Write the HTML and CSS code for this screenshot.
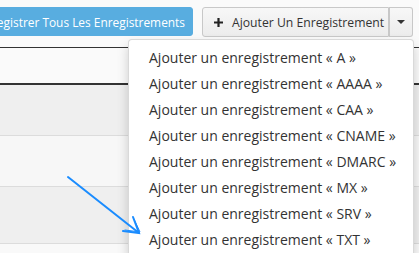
FILE: index.html
```html
<!DOCTYPE html>
<html lang="fr">
<head>
<meta charset="utf-8">
<link rel="stylesheet" href="styles.css">
</head>
<body>
<div class="page">
  <div class="toolbar">
    <button class="btn btn-info">Enregistrer Tous Les Enregistrements</button>
    <div class="btn-group">
      <button class="btn btn-default btn-main">
        <svg class="plus" width="9" height="9" viewBox="0 0 9 9"><path d="M4.5 0v9M0 4.5h9" stroke="#222" stroke-width="2.2"/></svg>
        <span>Ajouter Un Enregistrement</span>
      </button>
      <button class="btn btn-default btn-caret"><span class="caret"></span></button>
    </div>
  </div>
  <div class="table">
    <div class="thead"></div>
    <div class="row row-a"></div>
    <div class="row row-b"></div>
    <div class="row row-a row-tall"></div>
    <div class="row row-c"></div>
  </div>
  <ul class="menu">
    <li>Ajouter un enregistrement « A »</li>
    <li>Ajouter un enregistrement « AAAA »</li>
    <li>Ajouter un enregistrement « CAA »</li>
    <li>Ajouter un enregistrement « CNAME »</li>
    <li>Ajouter un enregistrement « DMARC »</li>
    <li>Ajouter un enregistrement « MX »</li>
    <li>Ajouter un enregistrement « SRV »</li>
    <li>Ajouter un enregistrement « TXT »</li>
  </ul>
  <svg class="arrow" width="419" height="253" viewBox="0 0 419 253">
    <g stroke="#1a8cff" stroke-width="2" fill="none" stroke-linecap="round">
      <path d="M68 177 L139 233"/>
      <path d="M133 217 L139 233 L123 231"/>
      <path d="M134 219 L140 232 L125 230" stroke-width="1"/>
    </g>
  </svg>
</div>
</body>
</html>
```
FILE: styles.css
```css
* { box-sizing: border-box; }
html, body { margin: 0; padding: 0; background: #fff; }
body { font-family: "Open Sans", "DejaVu Sans", sans-serif; overflow: hidden; }
.page { position: relative; width: 419px; height: 253px; overflow: hidden; }

.toolbar {
  display: flex;
  justify-content: flex-end;
  align-items: flex-start;
  gap: 9px;
  padding: 7px 6px 0 0;
  height: 47px;
  background: #fafafa;
}
.btn {
  font-family: "Open Sans", sans-serif;
  font-size: 12.2px;
  height: 30px;
  border-radius: 3px;
  display: flex;
  align-items: center;
  white-space: nowrap;
  flex-shrink: 0;
  cursor: pointer;
}
.btn-info {
  background: #58ade0;
  border: 1px solid #58ade0;
  color: #fff;
  height: 29px;
  font-size: 11.9px;
  padding: 0 7px 0 10px;
}
.btn-group { display: flex; }
.btn-default {
  background: linear-gradient(#f7f7f7, #ececec);
  border: 1px solid #c8c8c8;
  color: #333;
}
.btn-main {
  width: 187px;
  border-radius: 3px 0 0 3px;
  padding: 0 0 0 11px;
  gap: 9px;
  overflow: hidden;
}
.plus { flex-shrink: 0; }
.btn-caret {
  width: 24px;
  border-left: none;
  border-radius: 0 3px 3px 0;
  justify-content: center;
  padding: 0;
  box-shadow: inset 1px 0 0 #c8c8c8;
}
.caret {
  width: 0; height: 0;
  border-left: 4px solid transparent;
  border-right: 4px solid transparent;
  border-top: 4px solid #333;
}

.table { border-top: 1px solid #333; }
.thead { height: 37px; background: #fafafa; border-bottom: 2px solid #333; }
.row { height: 51px; border-bottom: 1px solid #dcdcdc; }
.row-a { background: #efefef; }
.row-b { background: #f7f7f7; }
.row-tall { height: 57px; }
.row-c { height: 20px; background: #f9f9f9; border-bottom: none; }

.menu {
  position: absolute;
  left: 128px;
  top: 39px;
  width: 286px;
  margin: 0;
  padding: 5px 0;
  list-style: none;
  background: #fff;
  border: 1px solid rgba(0,0,0,.15);
  border-radius: 4px;
  box-shadow: 0 6px 12px rgba(0,0,0,.175);
  font-size: 14px;
  color: #333;
}
.menu li {
  height: 26px;
  line-height: 26px;
  padding-left: 20px;
  white-space: nowrap;
}
.arrow { position: absolute; left: 0; top: 0; pointer-events: none; }
```
